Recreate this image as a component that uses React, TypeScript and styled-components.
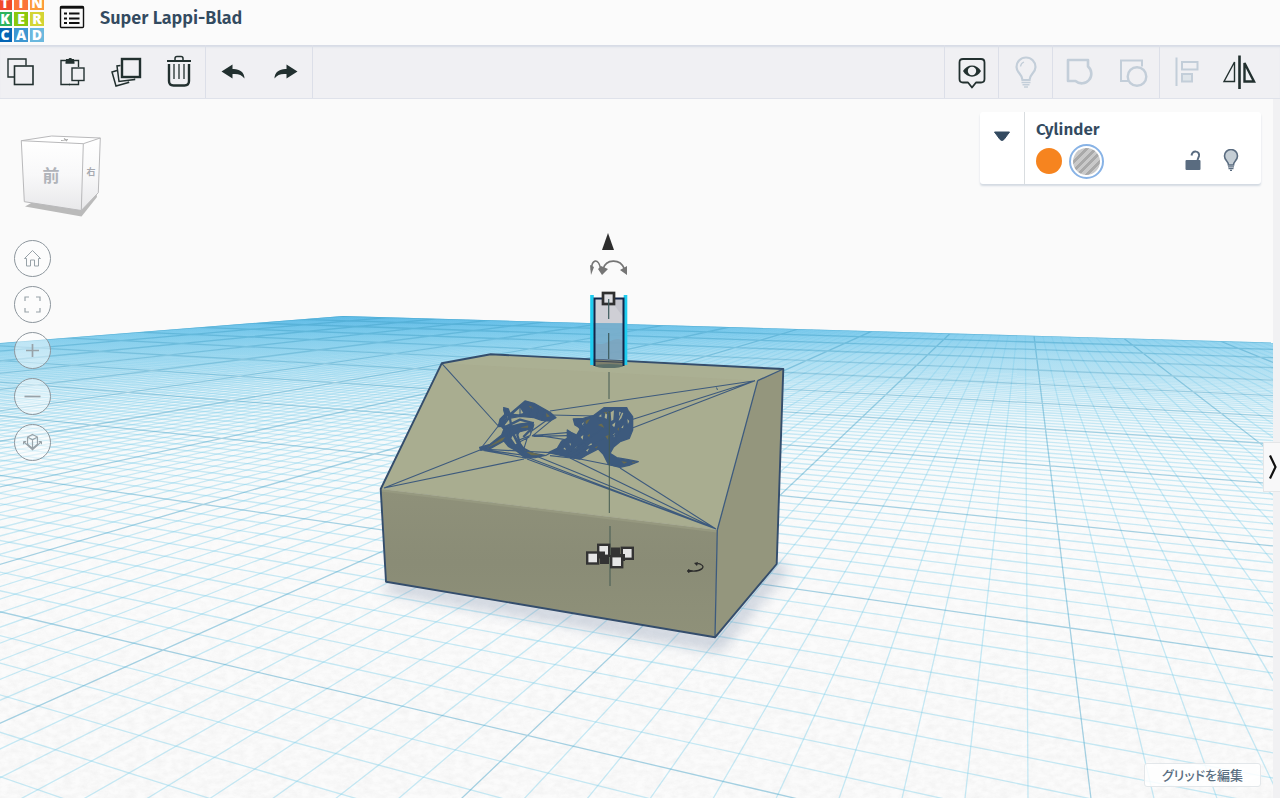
import React from "react";
import styled, { createGlobalStyle } from "styled-components";

const GlobalStyle = createGlobalStyle`
  * { box-sizing: border-box; }
  body { margin: 0; background: #fafafa; }
  button { font: inherit; cursor: pointer; }
`;

const ink = "#22302f";
const navy = "#334a60";
const faded = "#c3ced9";
const uiFont = `"Noto Sans", "Noto Sans CJK JP", sans-serif`;
const headingFont = `"Fira Sans", "Open Sans", sans-serif`;

const Page = styled.div`
  display: flex;
  flex-direction: column;
  min-height: 100vh;
  font-family: ${uiFont};
  color: ${navy};
  overflow: hidden;
`;

const Header = styled.header`
  display: flex;
  align-items: flex-start;
  height: 45px;
  overflow: hidden;
  background: #fbfbfb;
`;

const Logo = styled.a`
  display: grid;
  grid-template-columns: repeat(3, 14px);
  grid-auto-rows: 14px;
  gap: 2px;
  margin: -4px 0 0 -2px;
  text-decoration: none;
`;

const LogoTile = styled.span<{ $color: string }>`
  display: flex;
  align-items: center;
  justify-content: center;
  background: ${(p) => p.$color};
  color: #fff;
  font: 800 14px/14px "Open Sans", sans-serif;
`;

const IconButton = styled.button`
  display: flex;
  align-items: center;
  justify-content: center;
  padding: 0;
  border: 0;
  background: none;
  color: inherit;
`;

const MenuButton = styled(IconButton)`
  width: 26px;
  height: 24px;
  margin: 5px 15px 0 15px;
`;

const ProjectTitle = styled.h1`
  margin: 6px 0 0;
  font-family: ${headingFont};
  font-size: 18px;
  line-height: 24px;
  font-weight: 600;
`;

const Toolbar = styled.div`
  display: flex;
  justify-content: space-between;
  height: 54px;
  padding-right: 14px;
  background: #f0f0f3;
  border-bottom: 1px solid #dfe2ea;
  box-shadow: inset 0 3px 2px -1px #d6dbe5;
`;

const ToolSet = styled.div<{ $lead?: boolean }>`
  display: flex;
  margin-left: ${(p) => (p.$lead ? "-7px" : "0")};
`;

const ToolGroup = styled.div<{ $side: "left" | "right" }>`
  display: flex;
  border-${(p) => p.$side}: 1px solid #dcdfe8;
`;

const ToolButton = styled(IconButton)`
  width: 53px;
  height: 53px;
  color: ${ink};
  &:disabled { color: ${faded}; cursor: default; }
`;

const Body = styled.div`
  display: flex;
  flex: 1;
`;

const Workspace = styled.main`
  position: relative;
  display: flex;
  justify-content: space-between;
  flex: 1;
  background: #fafafa;
`;

const Scene = styled.svg`
  position: absolute;
  inset: 0;
  width: 100%;
  height: 100%;
`;

const ViewColumn = styled.div`
  position: relative;
  display: flex;
  flex-direction: column;
  gap: 9px;
  padding: 33px 0 0 14px;
`;

const CubeDrawing = styled.svg`
  width: 92px;
  height: 99px;
`;

const ViewButton = styled(IconButton)`
  width: 37px;
  height: 37px;
  border: 1px solid #8d969d;
  border-radius: 50%;
  background: rgba(255, 255, 255, 0.45);
  color: #98a2a8;
`;

const InfoColumn = styled.div`
  position: relative;
  display: flex;
  flex-direction: column;
  justify-content: space-between;
  align-items: flex-end;
  padding: 13px 12px 11px 0;
`;

const Inspector = styled.section`
  display: flex;
  width: 281px;
  height: 72px;
  border-radius: 3px;
  background: #fff;
  box-shadow: 0 2px 2px #d3dae2;
`;

const CollapseButton = styled(IconButton)`
  align-items: flex-start;
  width: 45px;
  padding-top: 19px;
  border-right: 1px solid #d9dde0;
`;

const InspectorBody = styled.div`
  flex: 1;
  padding: 6px 20px 0 11px;
`;

const ShapeName = styled.h2`
  margin: 0;
  font-family: ${headingFont};
  font-size: 17px;
  line-height: 24px;
  font-weight: 600;
`;

const ShapeRow = styled.div`
  display: flex;
  align-items: center;
  height: 38px;
`;

const SolidSwatch = styled(IconButton)`
  width: 26px;
  height: 26px;
  margin-right: 7px;
  border-radius: 50%;
  background: #f6841f;
`;

const HoleSwatch = styled(IconButton)`
  width: 35px;
  height: 35px;
  border: 2px solid #88b3e6;
  border-radius: 50%;
  background: #fff;
`;

const HoleFill = styled.span`
  width: 27px;
  height: 27px;
  border-radius: 50%;
  background: repeating-linear-gradient(135deg, #c9c9c9 0 3px, #a9a9a9 3px 6px);
`;

const ShapeActions = styled.div`
  display: flex;
  gap: 18px;
  margin-left: auto;
`;

const SmallButton = styled(IconButton)`
  width: 20px;
  height: 24px;
`;

const GridButton = styled.button`
  width: 117px;
  height: 24px;
  padding: 0;
  border: 1px solid #e3e7ea;
  border-radius: 3px;
  background: rgba(255, 255, 255, 0.85);
  color: #5b6f82;
  font-family: "Noto Sans CJK JP", sans-serif;
  font-size: 13px;
  line-height: 20px;
  font-weight: 500;
  font-feature-settings: "palt";
`;

const Rail = styled.aside`
  position: relative;
  display: flex;
  align-items: center;
  width: 7px;
  padding-top: 36px;
  background: #f1f1f3;
`;

const RailButton = styled(IconButton)`
  flex: none;
  width: 17px;
  height: 50px;
  margin-left: -10px;
  padding-left: 2px;
  border: 1px solid #e4e6e8;
  border-right: 0;
  background: #f8f8f9;
`;

/* ---------- perspective of the work plane ---------- */

type Pt = [number, number];

function solve(m: number[][]): number[] {
  const n = m.length;
  for (let c = 0; c < n; c++) {
    let p = c;
    for (let r = c + 1; r < n; r++) if (Math.abs(m[r][c]) > Math.abs(m[p][c])) p = r;
    [m[c], m[p]] = [m[p], m[c]];
    for (let r = 0; r < n; r++) {
      if (r === c) continue;
      const f = m[r][c] / m[c][c];
      for (let k = c; k <= n; k++) m[r][k] -= f * m[c][k];
    }
  }
  return m.map((row, i) => row[n] / row[i]);
}

function homography(src: Pt[], dst: Pt[]): number[] {
  const rows: number[][] = [];
  src.forEach(([u, v], i) => {
    const [x, y] = dst[i];
    rows.push([u, v, 1, 0, 0, 0, -u * x, -v * x, x]);
    rows.push([0, 0, 0, u, v, 1, -u * y, -v * y, y]);
  });
  return solve(rows);
}

const H = homography(
  [[0, -1], [2, 0], [4, 10], [-9, 10]],
  [[163, 650], [1070, 628], [1220, 341], [343, 316]]
);
const depth = (u: number, v: number) => H[6] * u + H[7] * v + 1;
const project = (u: number, v: number): Pt => {
  const w = depth(u, v);
  return [(H[0] * u + H[1] * v + H[2]) / w, (H[3] * u + H[4] * v + H[5]) / w];
};
const NEAR = 0.25;
const fmt = ([x, y]: Pt) => `${x.toFixed(1)} ${y.toFixed(1)}`;

function gridPaths() {
  const out = { minorU: "", minorV: "", major: "" };
  for (let i = -90; i <= 110; i++) {
    const u = i / 10;
    const start = Math.max(-8, (NEAR - 1 - H[6] * u) / H[7]);
    const d = `M${fmt(project(u, start))}L${fmt(project(u, 10))}`;
    if (i % 10 === 0) out.major += d;
    else out.minorU += d;
  }
  for (let j = -50; j <= 100; j++) {
    const v = j / 10;
    const end = Math.min(11, (NEAR - 1 - H[7] * v) / H[6]);
    if (end <= -9) continue;
    const d = `M${fmt(project(-9, v))}L${fmt(project(end, v))}`;
    if (j % 10 === 0) out.major += d;
    else out.minorV += d;
  }
  return out;
}
const grid = gridPaths();
const planeShape = `M${fmt(project(-9, 10))}L${fmt(project(11, 10))}L2600 1200L-1500 1200L${fmt(project(-9, 2))}Z`;

/* ---------- drawings ---------- */

const Handle = ({ x, y }: { x: number; y: number }) => (
  <rect x={x - 5.5} y={y - 5.5} width="11" height="11" fill="#e6e6e6" stroke="#333" strokeWidth="2.4" />
);

const Engraving = () => (
  <g transform="translate(470 385) scale(.3333)" stroke="#3d5a7d" strokeLinejoin="round">
    <path
      fill="#3d5a7d"
      strokeWidth="4"
      d="M165 48L192 55L240 82L258 98L240 108L215 106L192 98L150 94L118 100L98 124L85 125L90 103L105 88L101 68L115 72L120 86Z
      M85 118L115 126L150 117L190 112L188 130L150 140L132 148L142 165L162 190L190 205L226 211L195 218L165 219L140 198L115 184L102 168L62 190L32 196L29 187L60 178L95 150L102 132Z
      M310 102L340 100L370 92L402 68L470 68L474 76L488 95L488 135L478 160L450 170L430 187L420 205L440 218L475 224L505 230L480 240L450 247L415 238L400 208L385 192L350 210L330 222L290 215L235 203L262 190L275 168L292 160L292 135L303 142L320 150L332 130L315 120Z"
    />
    <path
      fill="#a8ad90"
      stroke="none"
      d="M130 86L150 68L160 84L146 88Z M104 104L114 92L110 108Z M128 152L140 176L136 178L124 160Z M140 150L154 142L146 162Z
      M406 84L414 78L410 102L404 98Z M422 82L432 76L430 104L424 108Z M448 80L460 84L454 100L446 108Z M386 94L394 88L394 96Z
      M426 120L436 112L434 128Z M336 116L344 110L340 124Z M332 156L340 150L338 164Z M354 182L364 174L366 180Z M298 176L306 172L302 182Z
      M314 190L322 184L320 194Z M348 196L358 190L352 200Z M454 128L460 120L460 132Z M472 102L478 108L474 118Z M280 192L286 186L288 194Z M428 150L436 144L432 158Z"
    />
    <path
      fill="#6a6b4e"
      stroke="none"
      d="M176 62L190 66L186 74Z M228 84L240 94L230 97Z M148 128L178 120L174 128Z M50 189L94 160L106 156L96 168Z M162 196L190 203L214 211L184 211Z M342 108L360 102L350 118Z M384 120L398 114L402 128Z M406 154L416 150L414 164Z M352 152L360 146L358 156Z M442 132L448 126L446 140Z M374 188L384 182L380 190Z M454 229L472 231L462 236Z M486 230L498 231L488 234Z M400 82L420 80L410 88Z"
    />
    <path
      fill="none"
      strokeWidth="3.5"
      d="M240 90L380 93M244 106L186 154M232 104L180 142M186 152L300 142M190 154L292 152M196 150L286 164M32 192L240 203M40 196L166 219M40 194L200 216M240 212L330 222L450 246M140 168L180 152L192 118M150 170L178 156M162 190L172 158M226 212L290 178M290 214L340 170L400 130M310 216L400 160M150 60L150 90M190 58L176 94M350 100L330 140M410 70L430 180M470 80L430 180M460 70L420 160L486 110M380 96L440 168M205 66L200 100M222 76L216 104"
    />
    <path
      fill="none"
      strokeWidth="7"
      d="M98 130L150 104L186 114M118 88L128 150M112 130L122 178L160 208M152 120L142 150L156 196M102 72L110 100L98 124M176 116L182 134L160 156M282 176L300 206L346 176M300 150L310 200M322 104L330 130L350 144"
    />
  </g>
);

const Model = () => (
  <g strokeLinejoin="round">
    <path d="M390 578L715 634L777 560L790 568L720 652L384 592Z" fill="#5d7396" opacity=".3" filter="url(#soft)" />
    <path d="M441.7 363.3L490.7 354.3L783.3 369L757.7 380.7L717.3 530L380.7 489Z" fill="#a9ad90" />
    <path d="M441.7 363.3L490.7 354.3L783.3 369L757.7 380.7Z" fill="#acb094" opacity=".7" />
    <path d="M380.7 489L717.3 530L715 637.3L386 581.7Z" fill="url(#front)" />
    <path d="M381 490L717 531" stroke="#9c9f85" strokeWidth="3" opacity=".6" />
    <path d="M757.7 380.7L783.3 369L776.7 564L715 637.3L717.3 530Z" fill="#94967d" />
    <g fill="none" stroke="#3d5a7d">
      <path strokeWidth="1.3" d="M757.7 380.7L783.3 369M757.7 380.7L717.3 530L715 637.3" />
      <path
        strokeWidth="1.1"
        d="M441.7 363.3L498.3 426L482 447M384 488L480 450M384 488L524 459M755 380.7L550 411M755 380.7L633 419.3M755 380.7L633 427.7
        M524 456L716 529M527 459L716 529M536 456L716 529M570 458L716 529M574 460L716 529M620 468L716 529"
      />
      <path d="M716.5 387.5L717.5 390" />
      <path
        strokeWidth="1.9"
        stroke="#344d6c"
        d="M441.7 363.3L490.7 354.3L783.3 369L776.7 564L715 637.3L386 581.7L380.7 489Z"
      />
    </g>
    <Engraving />
  </g>
);

const Cylinder = () => (
  <g>
    <rect x="594" y="298" width="30" height="25" fill="#cfcfd5" />
    <path d="M609 298H624V318Z" fill="#c3c3cb" />
    <rect x="594" y="323" width="30" height="36" fill="#78aecb" opacity=".92" />
    <path d="M594 342C604 350 616 332 624 342V360H594Z" fill="#8296a8" opacity=".35" />
    <path d="M594 359.5L624 361V366H594Z" fill="#7d7f6c" />
    <path d="M593 361L625 362.5" stroke="#26334f" strokeWidth="1" opacity=".8" />
    <ellipse cx="609" cy="366" rx="14" ry="2" fill="#5b6f69" />
    <path d="M592 295V365M625.5 295V365" stroke="#1fcdf0" strokeWidth="3.6" />
    <path d="M594.5 366V298.5H623.5V366" fill="none" stroke="#13264a" strokeWidth="2" />
    <rect x="603" y="293" width="11" height="11" fill="#dedee2" stroke="#2f2f2f" strokeWidth="2.7" />
    <path d="M608.7 299V319M608.7 333V359" stroke="#3c5a5c" strokeWidth="1.2" />
    <path d="M609 372V399M609.3 411V513M610 526V586" stroke="#445a52" strokeWidth="1" />
    <path d="M608 233L614 250H602Z" fill="#2d2d2d" />
    <g fill="none" stroke="#757575" strokeWidth="1.6">
      <path d="M591.5 270C591.5 259 598 258 600.5 268" />
      <path d="M603 269C606 259 620 258 624.5 269" />
    </g>
    <path d="M590 265L594 267L591 275Z M598 269L601 266L608 269L602 275Z M620 270L627 266L627 275Z" fill="#757575" />
    <rect x="611" y="547.5" width="9" height="9" fill="#333" />
    <rect x="600" y="555" width="9" height="9" fill="#333" />
    <Handle x={603.7} y={550.3} />
    <Handle x={627.3} y={553.3} />
    <rect x="598" y="551.5" width="7" height="7" fill="#333" />
    <rect x="618" y="554" width="7" height="7" fill="#333" />
    <Handle x={592.7} y={558} />
    <Handle x={616.7} y={561.7} />
    <path d="M687 571H692C701 571.5 706 567 701 564.5C700 563.8 698 563.5 697 564" fill="none" stroke="#2b2b2b" strokeWidth="1.3" />
    <path d="M688 569L693 571L688 573Z M694 563L698 562L697 566Z" fill="#2b2b2b" />
  </g>
);

const WorkScene = () => (
  <Scene viewBox="0 99 1273 699" preserveAspectRatio="xMidYMid slice" role="img" aria-label="3D workplane">
    <defs>
      <clipPath id="plane"><path d={planeShape} /></clipPath>
      <linearGradient id="haze" gradientUnits="userSpaceOnUse" x1="0" y1="316" x2="0" y2="540">
        <stop offset="0" stopColor="#52b3e5" />
        <stop offset=".08" stopColor="#80ccee" stopOpacity=".9" />
        <stop offset=".18" stopColor="#a4dcf3" stopOpacity=".65" />
        <stop offset=".32" stopColor="#b8e4f5" stopOpacity=".38" />
        <stop offset=".55" stopColor="#c9ecf8" stopOpacity=".12" />
        <stop offset="1" stopColor="#e6f6fb" stopOpacity="0" />
      </linearGradient>
      <linearGradient id="front" x1="0" y1="0" x2="0" y2="1">
        <stop offset="0" stopColor="#8f917a" />
        <stop offset=".5" stopColor="#8a8c76" />
        <stop offset="1" stopColor="#8f9179" />
      </linearGradient>
      <linearGradient id="lineFade" gradientUnits="userSpaceOnUse" x1="0" y1="316" x2="0" y2="620">
        <stop offset="0" stopColor="#6cc4e8" stopOpacity=".25" />
        <stop offset=".4" stopColor="#74cae8" stopOpacity=".36" />
        <stop offset="1" stopColor="#7ccfea" stopOpacity=".42" />
      </linearGradient>
      <filter id="soft" x="-20%" y="-30%" width="140%" height="160%">
        <feGaussianBlur stdDeviation="7" />
      </filter>
      <filter id="paper" x="0" y="0" width="100%" height="100%">
        <feTurbulence type="fractalNoise" baseFrequency=".11 .2" numOctaves="3" seed="4" />
        <feColorMatrix values="0 0 0 0 .88  0 0 0 0 .88  0 0 0 0 .88  1.5 0 0 0 -.5" />
      </filter>
      <linearGradient id="grainFade" gradientUnits="userSpaceOnUse" x1="0" y1="450" x2="0" y2="700">
        <stop offset="0" stopColor="#000" />
        <stop offset="1" stopColor="#fff" />
      </linearGradient>
      <mask id="grainMask" maskUnits="userSpaceOnUse" x="-400" y="99" width="2100" height="1000">
        <rect x="-400" y="99" width="2100" height="1000" fill="url(#grainFade)" />
      </mask>
    </defs>
    <g clipPath="url(#plane)">
      <rect x="-400" y="300" width="2100" height="900" fill="#fbfbfb" />
      <g mask="url(#grainMask)">
        <rect x="0" y="440" width="1280" height="400" filter="url(#paper)" />
      </g>
      <rect x="-400" y="300" width="2100" height="300" fill="url(#haze)" />
      <path d={grid.minorV} stroke="url(#lineFade)" strokeWidth="1.3" />
      <path d={grid.minorU} stroke="url(#lineFade)" strokeWidth="1.3" />
      <path d={grid.major} stroke="#3f9fc6" strokeWidth="1.3" opacity=".45" />
    </g>
    <Model />
    <Cylinder />
  </Scene>
);

const ViewCube = () => (
  <CubeDrawing viewBox="14 132 92 99" role="img" aria-label="view cube">
    <defs>
      <linearGradient id="cubeFront" x1="0" y1="0" x2="0" y2="1">
        <stop offset="0" stopColor="#fff" />
        <stop offset=".5" stopColor="#f8f8f9" />
        <stop offset="1" stopColor="#e8e8ea" />
      </linearGradient>
    </defs>
    <path d="M25 206.5L33 202L96 191L97 197L81.5 216.5Z" fill="#bababa" />
    <path d="M21.3 140.7L51.7 136L100.3 138L83.3 143.7Z" fill="#fff" />
    <path d="M83.3 143.7L100.3 138L98.3 192.7L81.3 210.5Z" fill="url(#cubeFront)" />
    <path d="M21.3 140.7L83.3 143.7L81.3 210.5L24.3 201.7Z" fill="url(#cubeFront)" />
    <path
      d="M21.3 140.7L51.7 136L100.3 138L83.3 143.7ZM83.3 143.7L81.3 210.5L24.3 201.7L21.3 140.7M100.3 138L98.3 192.7L81.3 210.5"
      fill="none"
      stroke="#b9b9bb"
    />
    <path d="M61 140.5L68 139.5M64 138.5L67 141" stroke="#aaa" strokeWidth="1.2" />
    <text x="51" y="182" textAnchor="middle" fontSize="17" fontWeight="700" fill="#b0b3b9" fontFamily="Noto Sans CJK JP, sans-serif">前</text>
    <text x="91" y="175" textAnchor="middle" fontSize="9" fontWeight="700" fill="#a6a9b0" fontFamily="Noto Sans CJK JP, sans-serif">右</text>
  </CubeDrawing>
);

const Icon = ({ w, h, box, children }: { w: number; h: number; box: string; children: React.ReactNode }) => (
  <svg width={w} height={h} viewBox={box} fill="none" stroke="currentColor" aria-hidden="true">
    {children}
  </svg>
);

/* Toolbar glyphs share a 36 × 36 box. */
const ToolIcon = ({ children }: { children: React.ReactNode }) => (
  <Icon w={36} h={36} box="0 0 36 36">{children}</Icon>
);

const CopyIcon = () => (
  <ToolIcon>
    <path d="M12 23H6V5H24V11.5" strokeWidth="1.4" />
    <rect x="12.5" y="12" width="18.5" height="18.5" strokeWidth="1.6" />
  </ToolIcon>
);
const PasteIcon = () => (
  <ToolIcon>
    <path d="M15 30.5H6V6.500H11M19 6.500H23.500V13" strokeWidth="1.4" />
    <path d="M11 5H13.500C13.500 3.500 17 3.500 17 5H19V9H11Z" fill="currentColor" stroke="none" />
    <path d="M10.500 8.500H19.500" strokeWidth="2.5" />
    <rect x="17" y="14" width="12" height="12.500" strokeWidth="1.4" />
    <path d="M23.500 27V30.500H14" strokeWidth="1.4" />
  </ToolIcon>
);
const DuplicateIcon = () => (
  <ToolIcon>
    <rect x="14" y="5" width="18" height="18" strokeWidth="2.4" />
    <path d="M12.500 11.500L9 12L11 27.500L26.500 25.500V24.500" strokeWidth="1.5" />
    <path d="M9 16.500L4 18L8 32L20.500 28.500L20 27.500" strokeWidth="1.5" />
  </ToolIcon>
);
const TrashIcon = () => (
  <ToolIcon>
    <path d="M6 7H30" strokeWidth="2" />
    <path d="M14 6V4.500Q14 2.500 16 2.500H20Q22 2.500 22 4.500V6" strokeWidth="1.5" />
    <path d="M8 10V27C8 30 9.500 31.500 12.500 31.500H23.500C26.500 31.500 28 30 28 27V10" strokeWidth="2.4" />
    <path d="M13 10V25M18 10V25M23 10V25" strokeWidth="1.3" />
  </ToolIcon>
);
const UndoIcon = () => (
  <ToolIcon>
    <path d="M6.500 17.500L17.500 10.500V15C24 14.500 29.500 18 29.500 24.500C26.500 20.500 23 19.500 17.500 20V24.500Z" fill="currentColor" stroke="none" />
  </ToolIcon>
);
const RedoIcon = () => (
  <ToolIcon>
    <path d="M29.500 17.500L18.500 10.500V15C12 14.500 6.500 18 6.500 24.500C9.500 20.500 13 19.500 18.500 20V24.500Z" fill="currentColor" stroke="none" />
  </ToolIcon>
);
const EyeIcon = () => (
  <ToolIcon>
    <path d="M9 5H27Q30.500 5 30.500 8.500V25Q30.500 28.500 27 28.500H22L18 33.500L14 28.500H9Q5.500 28.500 5.500 25V8.500Q5.500 5 9 5Z" strokeWidth="1.8" strokeLinejoin="round" />
    <path d="M9 17C13 9.500 23 9.500 27 17C23 24.500 13 24.500 9 17Z" fill="currentColor" stroke="none" />
    <circle cx="18" cy="17" r="4.2" fill="#f0f0f3" stroke="none" />
  </ToolIcon>
);
const BulbIcon = () => (
  <ToolIcon>
    <path d="M14.500 26C14.500 20 8.500 19 8.500 13A9.500 9.500 0 0 1 27.500 13C27.500 19 21.500 20 21.500 26Z" strokeWidth="2.2" />
    <path d="M12.500 12.500Q13 9 16 8" strokeWidth="1.3" />
    <path d="M13.500 28.500H22.500M14.500 30.800H21.500M16 33H20" strokeWidth="1.5" />
  </ToolIcon>
);
const GroupIcon = () => (
  <ToolIcon>
    <path d="M6 6H26V12.500A9.500 9.500 0 1 1 13.500 27H6Z" strokeWidth="2.6" strokeLinejoin="round" />
  </ToolIcon>
);
const UngroupIcon = () => (
  <ToolIcon>
    <path d="M13 27H6V6.500H27V12.500" strokeWidth="2" />
    <circle cx="22" cy="22.500" r="9.3" strokeWidth="2.4" />
  </ToolIcon>
);
const AlignIcon = () => (
  <ToolIcon>
    <path d="M7.500 3.500V32" strokeWidth="2" />
    <rect x="13" y="8" width="15.500" height="7.500" strokeWidth="2" />
    <rect x="13" y="20" width="10" height="7.500" strokeWidth="2" fill="#dfe5ea" />
  </ToolIcon>
);
const MirrorIcon = () => (
  <ToolIcon>
    <path d="M17.500 1.500V35" strokeWidth="2.6" />
    <path d="M12.500 8V27.500H2Z" strokeWidth="1.4" />
    <path d="M22.500 9V27.500H32Z" strokeWidth="2.4" />
  </ToolIcon>
);

type Tool = { label: string; icon: React.FC; off?: boolean };
const leftTools: Tool[][] = [
  [
    { label: "コピー", icon: CopyIcon },
    { label: "貼り付け", icon: PasteIcon },
    { label: "複製", icon: DuplicateIcon },
    { label: "削除", icon: TrashIcon },
  ],
  [
    { label: "元に戻す", icon: UndoIcon },
    { label: "やり直し", icon: RedoIcon },
  ],
];
const rightTools: Tool[][] = [
  [{ label: "表示", icon: EyeIcon }],
  [{ label: "すべて表示", icon: BulbIcon, off: true }],
  [
    { label: "グループ化", icon: GroupIcon, off: true },
    { label: "グループ解除", icon: UngroupIcon, off: true },
  ],
  [
    { label: "位置合わせ", icon: AlignIcon, off: true },
    { label: "反転", icon: MirrorIcon },
  ],
];

const Tools = ({ groups, side }: { groups: Tool[][]; side: "left" | "right" }) => (
  <ToolSet $lead={side === "right"}>
    {groups.map((group, i) => (
      <ToolGroup key={i} $side={side}>
        {group.map(({ label, icon: Glyph, off }) => (
          <ToolButton key={label} type="button" aria-label={label} disabled={off}>
            <Glyph />
          </ToolButton>
        ))}
      </ToolGroup>
    ))}
  </ToolSet>
);

const viewIcons: { label: string; art: React.ReactNode }[] = [
  { label: "ホームビュー", art: <path d="M1.500 9.500L9.500 1.500L17.500 9.500H15.500V17H11.500V11H7.500V17H3.500V9.500Z" /> },
  { label: "全体を表示", art: <path d="M6 2H2V6M13 2H17V6M2 13V17H6M17 13V17H13" strokeWidth="1.2" /> },
  { label: "拡大", art: <path d="M9.500 3V16M3 9.500H16" strokeWidth="1.7" /> },
  { label: "縮小", art: <path d="M1.500 9.500H17.500" strokeWidth="1.7" /> },
  {
    label: "投影切り替え",
    art: (
      <path
        d="M9.500 1L15 4V12L9.500 16.500L4 12V4ZM4 4L9.500 7L15 4M9.500 7V17M-.5 9L9.500 18L19.500 9M-.5 9V12M-.5 9H2.500M19.500 9V12M19.500 9H16.500"
        transform="translate(.95 .5) scale(.9)"
        strokeWidth="1.3"
      />
    ),
  },
];

const tiles: [string, string][] = [
  ["T", "#f1492b"], ["I", "#fb7439"], ["N", "#fd9b3a"],
  ["K", "#2cb35c"], ["E", "#8ac80c"], ["R", "#d3d434"],
  ["C", "#0465b5"], ["A", "#3e97d1"], ["D", "#6bb8de"],
];

export default function App() {
  return (
    <Page>
      <GlobalStyle />
      <Header>
        <Logo href="#" aria-label="Tinkercad">
          {tiles.map(([letter, color]) => (
            <LogoTile key={letter} $color={color}>{letter}</LogoTile>
          ))}
        </Logo>
        <MenuButton type="button" aria-label="デザイン一覧">
          <svg width="26" height="24" viewBox="0 0 26 24" fill="none" stroke="#111" aria-hidden="true">
            <rect x="1.500" y="1.500" width="23" height="21" rx="1" strokeWidth="1.4" />
            <path d="M1.500 2.500H24.500" strokeWidth="2.4" />
            <path d="M5 8.500H8M5 13.500H8M5 18H8M10 8.500H20.500M10 13.500H20.500M10 18H20.500" strokeWidth="2.2" />
          </svg>
        </MenuButton>
        <ProjectTitle>Super Lappi-Blad</ProjectTitle>
      </Header>
      <Toolbar role="toolbar">
        <Tools groups={leftTools} side="right" />
        <Tools groups={rightTools} side="left" />
      </Toolbar>
      <Body>
        <Workspace>
          <WorkScene />
          <ViewColumn>
            <ViewCube />
            {viewIcons.map(({ label, art }) => (
              <ViewButton key={label} type="button" aria-label={label}>
                <Icon w={19} h={19} box="0 0 19 19">{art}</Icon>
              </ViewButton>
            ))}
          </ViewColumn>
          <InfoColumn>
            <Inspector>
              <CollapseButton type="button" aria-label="折りたたむ">
                <svg width="18" height="11" viewBox="0 0 18 11" aria-hidden="true">
                  <path d="M1.500 1H16.500L11 8.500Q9 10.500 7 8.500Z" fill={navy} stroke={navy} strokeLinejoin="round" />
                </svg>
              </CollapseButton>
              <InspectorBody>
                <ShapeName>Cylinder</ShapeName>
                <ShapeRow>
                  <SolidSwatch type="button" aria-label="ソリッド" />
                  <HoleSwatch type="button" aria-label="穴"><HoleFill /></HoleSwatch>
                  <ShapeActions>
                    <SmallButton type="button" aria-label="ロック">
                      <svg width="20" height="24" viewBox="0 0 20 24" fill="none" aria-hidden="true">
                        <rect x="2.500" y="11" width="15" height="10" rx="1" fill="#5a6c80" />
                        <path d="M8.500 6.500C9.500 1 17 1.500 16 7L14.500 11" stroke="#5a6c80" strokeWidth="2" />
                      </svg>
                    </SmallButton>
                    <SmallButton type="button" aria-label="表示切り替え">
                      <svg width="20" height="24" viewBox="0 0 20 24" stroke="#5a6c80" aria-hidden="true">
                        <path d="M7.500 16C7.500 12.500 3.500 11.500 3.500 7A6.500 6.500 0 0 1 16.500 7C16.500 11.500 12.500 12.500 12.500 16Z" fill="#c5ced5" strokeWidth="1.6" />
                        <path d="M7 17.800H13M7.500 19.600H12.500M9 21.400H11" strokeWidth="1.2" />
                      </svg>
                    </SmallButton>
                  </ShapeActions>
                </ShapeRow>
              </InspectorBody>
            </Inspector>
            <GridButton type="button">グリッドを編集</GridButton>
          </InfoColumn>
        </Workspace>
        <Rail>
          <RailButton type="button" aria-label="パネルを開く">
            <svg width="10" height="26" viewBox="0 0 10 26" fill="none" stroke="#111" strokeWidth="2.2" aria-hidden="true">
              <path d="M2 1.500L7.500 13L2 24.500" />
            </svg>
          </RailButton>
        </Rail>
      </Body>
    </Page>
  );
}
